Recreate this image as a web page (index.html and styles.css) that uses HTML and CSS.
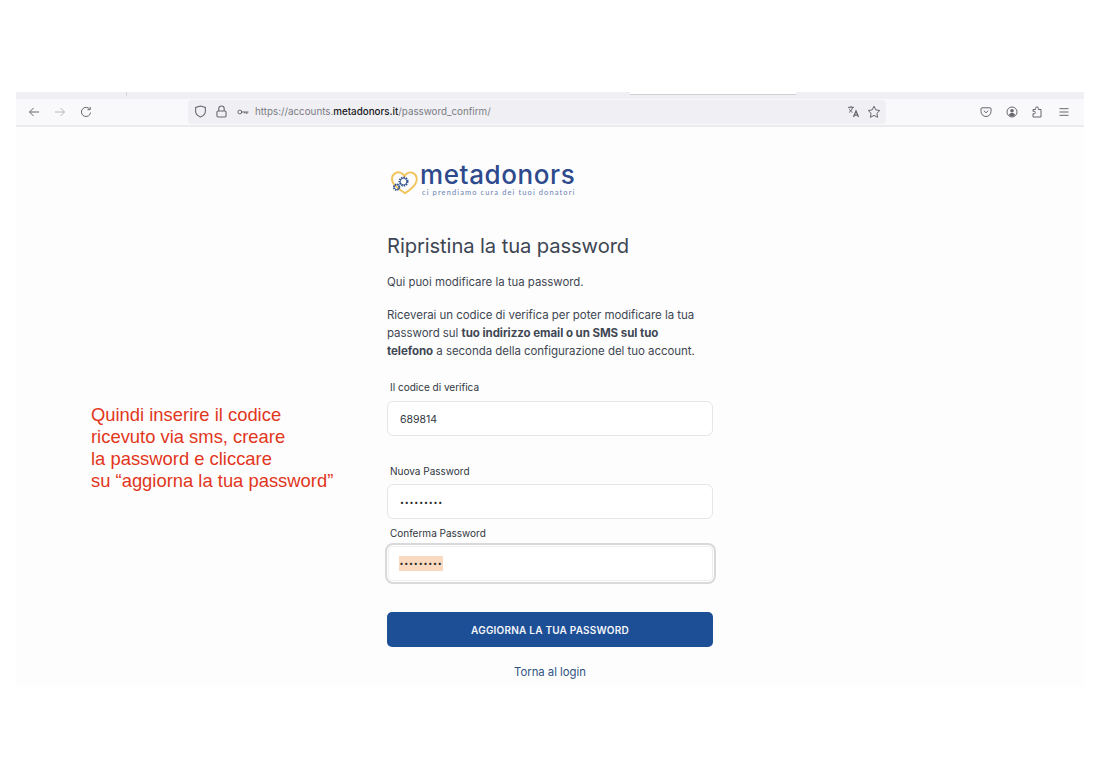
FILE: index.html
```html
<!DOCTYPE html>
<html lang="it">
<head>
<meta charset="utf-8">
<title>Ripristina la tua password</title>
<link rel="stylesheet" href="styles.css">
</head>
<body>
<div class="window">
  <div class="tabstrip"><span class="tabsep"></span><span class="tab"></span></div>
  <div class="toolbar">
    <div class="nav">
      <svg class="ico" viewBox="0 0 12 12"><path d="M11 6H1.500M5.500 2 1.500 6l4 4"/></svg>
      <svg class="ico dim" viewBox="0 0 12 12"><path d="M1 6h9.500M6.500 2l4 4-4 4"/></svg>
      <svg class="ico" viewBox="0 0 12 12"><path d="M9.800 3.300A4.600 4.600 0 1 0 10.600 6.500M10.200 1v2.700H7.500"/></svg>
    </div>
    <div class="urlbar">
      <svg class="ico shield" viewBox="0 0 12 12"><path d="M6 1 1.500 2.300v3.500C1.500 8.500 4 10.300 6 11c2-.7 4.500-2.500 4.500-5.200V2.300Z"/></svg>
      <svg class="ico lock" viewBox="0 0 12 12"><rect x="1.800" y="5.500" width="8.400" height="5.500" rx="1"/><path d="M3.500 5.500V3.400a2.500 2.500 0 0 1 5 0v2.100"/></svg>
      <svg class="ico key" viewBox="0 0 12 8"><circle cx="2.800" cy="4" r="1.900"/><path d="M4.700 4H11.500M9.800 4v2M7.800 4v1.500"/></svg>
      <span class="url">https://accounts.<b>metadonors.it</b>/password_confirm/</span>
      <span class="urlend">
        <svg class="ico translate" viewBox="0 0 13 13"><path d="M1 2.300h6M4 1v1.300M2 7.500c2-1.200 3.200-3 3.600-5.200M2.300 3.800c.6 1.500 1.600 2.800 3.200 3.500"/><path class="thick" d="M6.500 12 9 6l2.500 6M7.400 10.200h3.200"/></svg>
        <svg class="ico star" viewBox="0 0 14 14"><path d="m7 1.200 1.800 3.700 4 .6-2.900 2.800.7 4L7 10.400l-3.600 1.900.7-4-2.900-2.800 4-.6Z"/></svg>
      </span>
    </div>
    <div class="tools">
      <svg class="ico" viewBox="0 0 12 12"><path d="M2 1.800h8a1 1 0 0 1 1 1V5.500a5 5 0 0 1-10 0V2.800a1 1 0 0 1 1-1Z"/><path d="M3.800 4.700 6 6.800l2.200-2.100"/></svg>
      <svg class="ico" viewBox="0 0 12 12"><circle cx="6" cy="6" r="5"/><circle class="fill" cx="6" cy="4.700" r="1.800"/><path class="fill" d="M2.900 9c.5-1.300 1.700-1.900 3.100-1.900S8.600 7.700 9.100 9A4.500 4.500 0 0 1 6 10.400 4.500 4.500 0 0 1 2.900 9Z"/></svg>
      <svg class="ico" viewBox="0 0 12 12"><path d="M1 11V7.700h1.200a1.200 1.200 0 0 0 0-2.400H1V3.500h2.600V2.300a1.400 1.400 0 0 1 2.800 0v1.200H9V11Z"/></svg>
      <svg class="ico" viewBox="0 0 12 12"><path d="M1.500 2.700h9M1.500 6h9M1.500 9.300h9"/></svg>
    </div>
  </div>
  <main class="page">
    <div class="panel">
      <div class="brand">
        <svg class="mark" viewBox="0 0 30 28">
          <path class="heart" d="M15 6.500C13 2.500 8.500 1.500 5.500 3.300 1.500 5.700 1 10.500 3.500 14c2.700 3.800 7.500 7.200 12 10 4.500-2.800 8.500-6 10.800-9.800C28.700 10.300 28 5.700 24.500 3.500 21 1.400 17 2.500 15 6.500Z"/>
          <circle class="gear big" cx="14" cy="12" r="4.200"/>
          <circle class="ring" cx="14" cy="12" r="3.400"/>
          <circle class="gear small" cx="6.800" cy="17.800" r="3"/>
          <circle class="ring" cx="6.800" cy="17.800" r="2.400"/>
        </svg>
        <div class="wordmark">
          <div class="name">metadonors</div>
          <div class="tagline">ci prendiamo cura dei tuoi donatori</div>
        </div>
      </div>
      <h1>Ripristina la tua password</h1>
      <p class="intro">Qui puoi modificare la tua password.</p>
      <p class="explain">Riceverai un codice di verifica per poter modificare la tua password sul <b>tuo indirizzo email o un SMS sul tuo telefono</b> a seconda della configurazione del tuo account.</p>
      <label class="label first">Il codice di verifica</label>
      <div class="input code">689814</div>
      <label class="label second">Nuova Password</label>
      <div class="input plain"><span class="dots">•••••••••</span></div>
      <label class="label third">Conferma Password</label>
      <div class="input focused"><span class="selected dots">•••••••••</span></div>
      <button class="submit">AGGIORNA LA TUA PASSWORD</button>
      <a class="back">Torna al login</a>
    </div>
  </main>
</div>
<p class="note">Quindi inserire il codice<br>ricevuto via sms, creare<br>la password e cliccare<br>su “aggiorna la tua password”</p>
</body>
</html>
```
FILE: styles.css
```css
* { box-sizing: border-box; }
html, body { margin: 0; height: 100%; }
body {
  background: #fff;
  padding: 92px 16px 0;
  font-family: Inter, "Liberation Sans", sans-serif;
  position: relative;
  overflow: hidden;
}
.window { width: 1068px; height: 595px; background: #fdfdfd; }
.tabstrip { height: 7px; background: #f0f0f4; display: flex; position: relative; }
.tabsep { width: 1px; height: 4px; background: #d4d4d8; margin-left: 110px; }
.tab { width: 166px; height: 3px; margin-left: 503px; background: #fff; border-bottom: 1px solid #cfcfd2; }
.toolbar {
  height: 28px;
  background: #f9f9fb;
  border-bottom: 2px solid #ebebee;
  display: flex;
  align-items: center;
}
.ico { fill: none; stroke: #66666d; stroke-width: 1; display: block; width: 12px; height: 12px; flex: none; }
.ico .fill { fill: #66666d; stroke: none; }
.ico .thick { stroke-width: 1.300; }
.nav { display: flex; gap: 14px; align-items: center; padding-left: 12px; width: 172px; }
.nav .dim { stroke: #b8b8bd; }
.urlbar {
  width: 698px;
  height: 24px;
  margin-top: -1px;
  background: #f0f0f4;
  border-radius: 4px;
  display: flex;
  align-items: center;
  padding-left: 6px;
}
.shield { width: 13px; height: 13px; }
.lock { width: 13px; height: 13px; margin-left: 8px; }
.key { width: 12px; height: 8px; margin-left: 9px; }
.url { font-size: 9.800px; color: #7b7b83; margin-left: 6px; font-family: Inter, sans-serif; }
.url b { color: #17171a; font-weight: 500; }
.urlend { margin-left: auto; display: flex; gap: 7px; align-items: center; padding-right: 5px; }
.translate { width: 13px; height: 13px; }
.star { width: 14px; height: 14px; }
.tools { display: flex; gap: 14px; padding-left: 94px; align-items: center; }
.panel {
  width: 326px;
  margin-left: 371px;
  display: flex;
  flex-direction: column;
  align-items: stretch;
}
.brand { display: flex; align-items: flex-start; margin: 34px 0 0 3px; height: 40px; }
.mark { width: 29px; height: 27px; margin-top: 9px; flex: none; }
.heart { fill: none; stroke: #f2c35a; stroke-width: 2; }
.gear { fill: none; stroke: #2f4f8f; stroke-dasharray: 1.500 .9; }
.ring { fill: none; stroke: #2f4f8f; stroke-width: .8; }
.gear.big { stroke-width: 2; }
.gear.small { stroke-width: 1.600; }
.wordmark { margin-left: 1px; }
.name {
  font-family: Inter, sans-serif;
  font-size: 26px;
  font-weight: 500;
  line-height: 24px;
  margin-top: 1.500px;
  color: #2e4a8c;
  letter-spacing: .6px;
}
.tagline {
  font-family: Lato, sans-serif;
  font-size: 7.500px;
  line-height: 8px;
  color: #6b83b5;
  letter-spacing: 1.100px;
  margin: 2.500px 0 0 2px;
}
h1 {
  margin: 31px 0 0;
  font-size: 20.200px;
  line-height: 28px;
  font-weight: 400;
  color: #3d4653;
  letter-spacing: -.1px;
}
p {
  margin: 0;
  font-size: 11.400px;
  line-height: 19px;
  color: #3f4753;
}
.intro { margin-top: 13px; }
.explain { margin-top: 14px; max-width: 312px; font-size: 11.500px; line-height: 18px; letter-spacing: -.05px; }
.explain b { font-weight: 700; }
.label { display: block; font-size: 10px; line-height: 14px; color: #2f3640; margin-left: 3px; }
.label.first { margin-top: 20px; }
.label.second { margin-top: 28px; }
.label.third { margin-top: 7px; }
.input {
  height: 35px;
  margin-top: 6px;
  border: 1px solid #e4e6ea;
  border-radius: 6px;
  background: #fff;
  padding-left: 12px;
  display: flex;
  align-items: center;
  font-size: 10.500px;
  color: #2f3640;
}
.input.code { margin-top: 7px; padding-top: 1px; }
.input.plain { padding-top: 2px; }
.dots { font-size: 7px; letter-spacing: .85px; color: #2a2a2a; }
.input.focused {
  height: 41px;
  margin: 3px -2.500px 0;
  border: 2px solid #d9d9dc;
  border-radius: 8px;
  box-shadow: inset 0 0 0 1px #fff, inset 0 0 0 2px #eee;
  padding-left: 12px;
}
.selected { background: #f9d9bf; padding: 2px 0 2px 1px; line-height: 11px; }
.submit {
  display: block;
  height: 35px;
  margin-top: 28px;
  border: 0;
  border-radius: 5px;
  background: #1d4f96;
  color: #f4f6fa;
  font-family: Inter, sans-serif;
  font-size: 10px;
  font-weight: 600;
  letter-spacing: .22px;
}
.back { text-align: center; margin-top: 17px; font-size: 11.300px; line-height: 16px; color: #2f5383; }
.note {
  position: absolute;
  left: 91px;
  top: 403.500px;
  margin: 0;
  font-family: "Liberation Sans", sans-serif;
  font-size: 18.400px;
  line-height: 22px;
  color: #e2361c;
}
```
